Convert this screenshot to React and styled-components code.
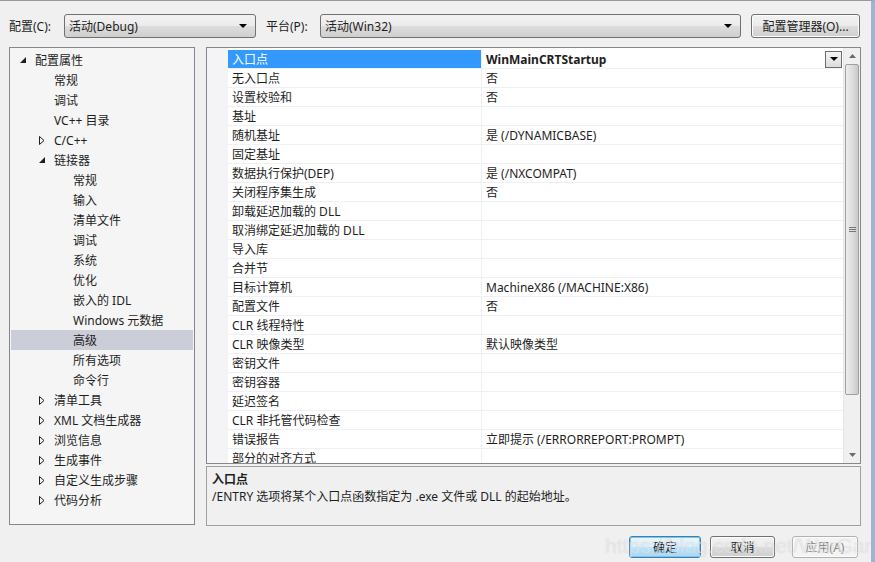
import React from "react";
import styled, { createGlobalStyle } from "styled-components";

const GlobalStyle = createGlobalStyle`
  html, body {
    margin: 0;
    padding: 0;
    background: #f0f0f0;
  }
  * { box-sizing: border-box; }
`;

const Window = styled.div`
  position: relative;
  width: 875px;
  height: 562px;
  background: #f0f0f0;
  border-top: 1px solid #9a9a9a;
  border-right: 4px solid #9fb4d3;
  font-family: "Noto Sans", "Noto Sans CJK SC", sans-serif;
  font-size: 12px;
  color: #1e1e1e;
  overflow: hidden;
`;

const TopBar = styled.div`
  display: flex;
  align-items: center;
  height: 24px;
  margin-top: 13px;
  padding-left: 9px;
`;

const Label = styled.span`
  width: ${(p) => p.w}px;
  white-space: nowrap;
`;

const Combo = styled.div`
  width: ${(p) => p.w}px;
  height: 24px;
  display: flex;
  align-items: center;
  justify-content: space-between;
  padding: 0 8px 0 4px;
  border: 1px solid #707070;
  border-radius: 3px;
  background: linear-gradient(#f2f2f2 0%, #ebebeb 50%, #dddddd 51%, #cfcfcf 100%);
  margin-right: ${(p) => p.mr}px;
`;

const Caret = styled.span`
  width: 0;
  height: 0;
  border-left: 4px solid transparent;
  border-right: 4px solid transparent;
  border-top: 4px solid #000;
`;

const Button = styled.div`
  width: ${(p) => p.w}px;
  height: ${(p) => p.h || 24}px;
  margin-left: ${(p) => p.ml || 0}px;
  display: flex;
  align-items: center;
  justify-content: center;
  border: 1px solid ${(p) => (p.primary ? "#3c7fb1" : p.disabled ? "#adb2b5" : "#707070")};
  border-radius: 3px;
  color: ${(p) => (p.disabled ? "#838383" : "#1e1e1e")};
  background: ${(p) =>
    p.primary
      ? "linear-gradient(#eaf6fd 0%, #d9f0fc 50%, #bee6fd 51%, #a7d9f5 100%)"
      : p.disabled
      ? "#f4f4f4"
      : "linear-gradient(#f2f2f2 0%, #ebebeb 50%, #dddddd 51%, #cfcfcf 100%)"};
  box-shadow: ${(p) => (p.primary ? "inset 0 0 0 1px #7ec4ee" : "inset 0 0 0 1px #fcfcfc")};
`;

const Main = styled.div`
  display: flex;
  gap: 11px;
  margin-top: 9px;
  padding-left: 9px;
  padding-right: 10px;
`;

const TreePanel = styled.div`
  width: 186px;
  height: 478px;
  border: 1px solid #828790;
  background: #f5f5f5;
  padding: 2px 1px 0;
`;

const TreeRow = styled.div`
  display: flex;
  align-items: center;
  height: 20px;
  padding-left: ${(p) => 5 + p.level * 19}px;
  background: ${(p) => (p.selected ? "#cbcdd9" : "transparent")};
`;

const Expander = styled.span`
  width: 19px;
  display: flex;
  align-items: center;
  padding-left: 4px;
`;

const RightCol = styled.div`
  display: flex;
  flex-direction: column;
  width: 655px;
`;

const Grid = styled.div`
  display: flex;
  height: 417px;
  border: 1px solid #828790;
  background: #fff;
`;

const Gutter = styled.div`
  width: 21px;
  background: #f4f4f7;
`;

const Rows = styled.div`
  flex: 1;
  padding-top: 2px;
  overflow: hidden;
`;

const PropRow = styled.div`
  display: grid;
  grid-template-columns: 253px 1fr;
  height: 19px;
  border-bottom: 1px solid #eef0f5;
`;

const NameCell = styled.div`
  display: flex;
  align-items: center;
  padding-left: 4px;
  background: ${(p) => (p.selected ? "#3399ff" : "#fff")};
  color: ${(p) => (p.selected ? "#fff" : "#1e1e1e")};
  white-space: nowrap;
`;

const ValueCell = styled.div`
  display: flex;
  align-items: center;
  justify-content: space-between;
  padding-left: 4px;
  padding-right: 1px;
  border-left: 1px solid #eef0f5;
  font-weight: ${(p) => (p.bold ? 700 : 400)};
  white-space: nowrap;
`;

const DropBtn = styled.div`
  width: 17px;
  height: 17px;
  display: flex;
  align-items: center;
  justify-content: center;
  border: 1px solid #6e6e6e;
  background: linear-gradient(#f4f4f4, #dcdcdc);
`;

const Scrollbar = styled.div`
  width: 17px;
  display: flex;
  flex-direction: column;
  background: #f0f0f0;
  border-left: 1px solid #e6e6e6;
`;

const ScrollArrow = styled.div`
  height: 16px;
  display: flex;
  align-items: center;
  justify-content: center;
`;

const Thumb = styled.div`
  height: 331px;
  margin: 0 1px;
  border: 1px solid #a0a0a0;
  border-radius: 2px;
  background: linear-gradient(90deg, #ececec, #dadada 60%, #c8c8c8);
  display: flex;
  align-items: center;
  justify-content: center;
`;

const Track = styled.div`
  flex: 1;
`;

const Desc = styled.div`
  height: 60px;
  margin-top: 2px;
  border: 1px solid #a0a0a0;
  padding: 4px 5px;
  line-height: 17px;
`;

const DescTitle = styled.div`
  font-weight: 700;
`;

const Footer = styled.div`
  display: flex;
  justify-content: flex-end;
  margin-top: 10px;
  padding-right: 13px;
`;

const Watermark = styled.div`
  position: absolute;
  left: 605px;
  top: 533px;
  font-family: "Liberation Sans", Arial, sans-serif;
  font-size: 21px;
  color: rgba(255, 255, 255, 0.5);
  text-shadow: 0 0 1px rgba(120, 120, 120, 0.3);
  white-space: nowrap;
  pointer-events: none;
`;

const OpenArrow = () => (
  <svg width="7" height="7" viewBox="0 0 7 7">
    <polygon points="6,0 6,6 0,6" fill="#1e1e1e" />
  </svg>
);

const ClosedArrow = () => (
  <svg width="6" height="9" viewBox="0 0 6 9">
    <polygon points="0.5,0.5 5,4.5 0.5,8.5" fill="none" stroke="#1e1e1e" strokeWidth="1" />
  </svg>
);

const tree = [
  { l: 0, e: "open", t: "配置属性" },
  { l: 1, t: "常规" },
  { l: 1, t: "调试" },
  { l: 1, t: "VC++ 目录" },
  { l: 1, e: "closed", t: "C/C++" },
  { l: 1, e: "open", t: "链接器" },
  { l: 2, t: "常规" },
  { l: 2, t: "输入" },
  { l: 2, t: "清单文件" },
  { l: 2, t: "调试" },
  { l: 2, t: "系统" },
  { l: 2, t: "优化" },
  { l: 2, t: "嵌入的 IDL" },
  { l: 2, t: "Windows 元数据" },
  { l: 2, t: "高级", s: true },
  { l: 2, t: "所有选项" },
  { l: 2, t: "命令行" },
  { l: 1, e: "closed", t: "清单工具" },
  { l: 1, e: "closed", t: "XML 文档生成器" },
  { l: 1, e: "closed", t: "浏览信息" },
  { l: 1, e: "closed", t: "生成事件" },
  { l: 1, e: "closed", t: "自定义生成步骤" },
  { l: 1, e: "closed", t: "代码分析" },
];

const props = [
  ["入口点", "WinMainCRTStartup"],
  ["无入口点", "否"],
  ["设置校验和", "否"],
  ["基址", ""],
  ["随机基址", "是 (/DYNAMICBASE)"],
  ["固定基址", ""],
  ["数据执行保护(DEP)", "是 (/NXCOMPAT)"],
  ["关闭程序集生成", "否"],
  ["卸载延迟加载的 DLL", ""],
  ["取消绑定延迟加载的 DLL", ""],
  ["导入库", ""],
  ["合并节", ""],
  ["目标计算机", "MachineX86 (/MACHINE:X86)"],
  ["配置文件", "否"],
  ["CLR 线程特性", ""],
  ["CLR 映像类型", "默认映像类型"],
  ["密钥文件", ""],
  ["密钥容器", ""],
  ["延迟签名", ""],
  ["CLR 非托管代码检查", ""],
  ["错误报告", "立即提示 (/ERRORREPORT:PROMPT)"],
  ["部分的对齐方式", ""],
];

export default function App() {
  return (
    <Window>
      <GlobalStyle />
      <TopBar>
        <Label w={55}>配置(C):</Label>
        <Combo w={192} mr={10}>
          <span>活动(Debug)</span>
          <Caret />
        </Combo>
        <Label w={54}>平台(P):</Label>
        <Combo w={421} mr={10}>
          <span>活动(Win32)</span>
          <Caret />
        </Combo>
        <Button w={109}>配置管理器(O)...</Button>
      </TopBar>
      <Main>
        <TreePanel>
          {tree.map((n, i) => (
            <TreeRow key={i} level={n.l} selected={n.s}>
              <Expander>
                {n.e === "open" && <OpenArrow />}
                {n.e === "closed" && <ClosedArrow />}
              </Expander>
              <span>{n.t}</span>
            </TreeRow>
          ))}
        </TreePanel>
        <RightCol>
          <Grid>
            <Gutter />
            <Rows>
              {props.map(([name, value], i) => (
                <PropRow key={i}>
                  <NameCell selected={i === 0}>{name}</NameCell>
                  <ValueCell bold={i === 0}>
                    <span>{value}</span>
                    {i === 0 && (
                      <DropBtn>
                        <Caret />
                      </DropBtn>
                    )}
                  </ValueCell>
                </PropRow>
              ))}
            </Rows>
            <Scrollbar>
              <ScrollArrow>
                <svg width="7" height="4" viewBox="0 0 7 4">
                  <polygon points="0,4 3.5,0 7,4" fill="#6a6a6a" />
                </svg>
              </ScrollArrow>
              <Thumb>
                <svg width="7" height="6" viewBox="0 0 7 6">
                  <path d="M0 0.5H7M0 2.5H7M0 4.5H7" stroke="#777" strokeWidth="1" />
                </svg>
              </Thumb>
              <Track />
              <ScrollArrow>
                <svg width="7" height="4" viewBox="0 0 7 4">
                  <polygon points="0,0 3.5,4 7,0" fill="#6a6a6a" />
                </svg>
              </ScrollArrow>
            </Scrollbar>
          </Grid>
          <Desc>
            <DescTitle>入口点</DescTitle>
            <div>/ENTRY 选项将某个入口点函数指定为 .exe 文件或 DLL 的起始地址。</div>
          </Desc>
        </RightCol>
      </Main>
      <Footer>
        <Button w={72} h={22} primary>确定</Button>
        <Button w={65} h={22} ml={9}>取消</Button>
        <Button w={66} h={22} ml={17} disabled>应用(A)</Button>
      </Footer>
      <Watermark>https://blog.csdn.net/WarGames_dc</Watermark>
    </Window>
  );
}
